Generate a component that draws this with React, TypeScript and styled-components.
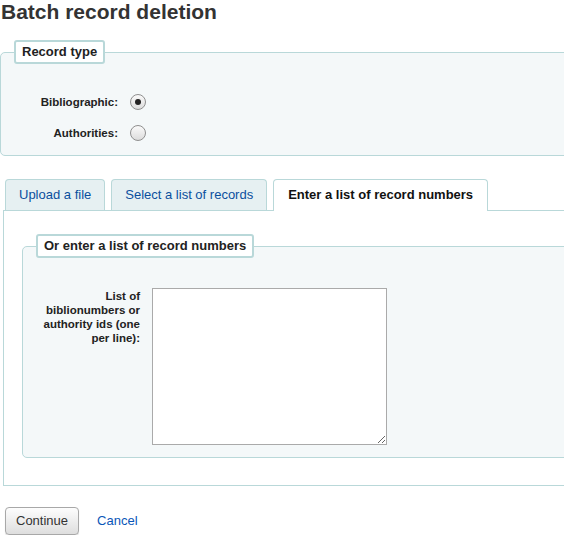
import React from "react";
import styled, { createGlobalStyle } from "styled-components";

const Global = createGlobalStyle`
  html, body { margin: 0; padding: 0; background: #fff; overflow: hidden; }
  body { font-family: "Liberation Sans", Arial, sans-serif; font-size: 13px; color: #222; }
`;

const Page = styled.div`
  width: 600px;
`;

const Title = styled.h1`
  margin: 0 0 16px 1px;
  font-size: 21px;
  line-height: 24px;
  font-weight: bold;
  color: #333;
`;

const Fieldset = styled.fieldset<{ $padBottom: number }>`
  margin: 0;
  border: 1px solid #b9d8d9;
  border-radius: 5px;
  background: #f4f8f9;
  padding: 23px 0 ${(p) => p.$padBottom}px 13px;
  min-width: 0;
`;

const Legend = styled.legend`
  border: 2px solid #b9d8d9;
  border-radius: 3px;
  background: #fff;
  padding: 2px 6px 3px;
  font-size: 13px;
  line-height: 15px;
  font-weight: bold;
  color: #222;
`;

const Row = styled.div<{ $top?: boolean }>`
  display: flex;
  align-items: ${(p) => (p.$top ? "flex-start" : "center")};
  padding: 7px 0 8px;
`;

const Label = styled.label<{ $top?: boolean }>`
  width: 104px;
  margin-right: 12px;
  text-align: right;
  font-size: 11.5px;
  line-height: 14px;
  font-weight: bold;
  color: #222;
  padding-top: ${(p) => (p.$top ? "1px" : "0")};
`;

const Radio = styled.input.attrs({ type: "radio" })`
  appearance: none;
  margin: 0;
  width: 16px;
  height: 16px;
  border-radius: 50%;
  border: 1px solid #8f8f8f;
  background: linear-gradient(#fafafa, #dcdcdc);
  box-sizing: border-box;
  display: grid;
  place-items: center;
  &:checked::after {
    content: "";
    width: 6px;
    height: 6px;
    border-radius: 50%;
    background: #222;
  }
`;

const Tabs = styled.div`
  margin: 23px 0 0 3px;
`;

const TabList = styled.div`
  display: flex;
  gap: 6px;
  padding-left: 2px;
`;

const Tab = styled.div<{ $active?: boolean }>`
  border: 1px solid #b9d8d9;
  border-bottom: none;
  border-radius: 4px 4px 0 0;
  padding: 7px ${(p) => (p.$active ? "14px" : "13px")} 8px;
  line-height: 15px;
  font-size: 13px;
  background: ${(p) => (p.$active ? "#fff" : "#e6f0f2")};
  color: ${(p) => (p.$active ? "#111" : "#0a4f9e")};
  font-weight: ${(p) => (p.$active ? "bold" : "normal")};
  margin-bottom: ${(p) => (p.$active ? "-1px" : "0")};
  padding-bottom: ${(p) => (p.$active ? "9px" : "8px")};
  position: relative;
  cursor: pointer;
`;

const Panel = styled.div`
  border: 1px solid #b9d8d9;
  background: #fff;
  padding: 23px 0 27px 18px;
`;

const TextArea = styled.textarea`
  width: 235px;
  height: 157px;
  box-sizing: border-box;
  border: 1px solid #aaa;
  margin: 0;
  padding: 2px;
  background: #fff;
`;

const Actions = styled.div`
  display: flex;
  align-items: center;
  gap: 18px;
  margin: 21px 0 0 5px;
`;

const Button = styled.button`
  font-family: "Liberation Sans", Arial, sans-serif;
  font-size: 13px;
  line-height: 15px;
  color: #333;
  padding: 5px 10px 6px;
  border: 1px solid #a8a8a8;
  border-radius: 4px;
  background: linear-gradient(#fdfdfd, #dedede);
  box-shadow: 0 1px 1px rgba(0, 0, 0, 0.15);
`;

const Link = styled.a`
  color: #0a56b8;
  text-decoration: none;
  font-size: 13px;
  margin-top: -2px;
`;

export default function App() {
  return (
    <Page>
      <Global />
      <Title>Batch record deletion</Title>
      <Fieldset $padBottom={6}>
        <Legend>Record type</Legend>
        <Row>
          <Label htmlFor="biblio">Bibliographic:</Label>
          <Radio id="biblio" name="recordtype" defaultChecked />
        </Row>
        <Row>
          <Label htmlFor="auth">Authorities:</Label>
          <Radio id="auth" name="recordtype" />
        </Row>
      </Fieldset>
      <Tabs>
        <TabList>
          <Tab>Upload a file</Tab>
          <Tab>Select a list of records</Tab>
          <Tab $active>Enter a list of record numbers</Tab>
        </TabList>
        <Panel>
          <Fieldset $padBottom={4}>
            <Legend>Or enter a list of record numbers</Legend>
            <Row $top>
              <Label $top htmlFor="recordnumbers">
                List of biblionumbers or authority ids (one per line):
              </Label>
              <TextArea id="recordnumbers" />
            </Row>
          </Fieldset>
        </Panel>
      </Tabs>
      <Actions>
        <Button>Continue</Button>
        <Link href="#">Cancel</Link>
      </Actions>
    </Page>
  );
}
